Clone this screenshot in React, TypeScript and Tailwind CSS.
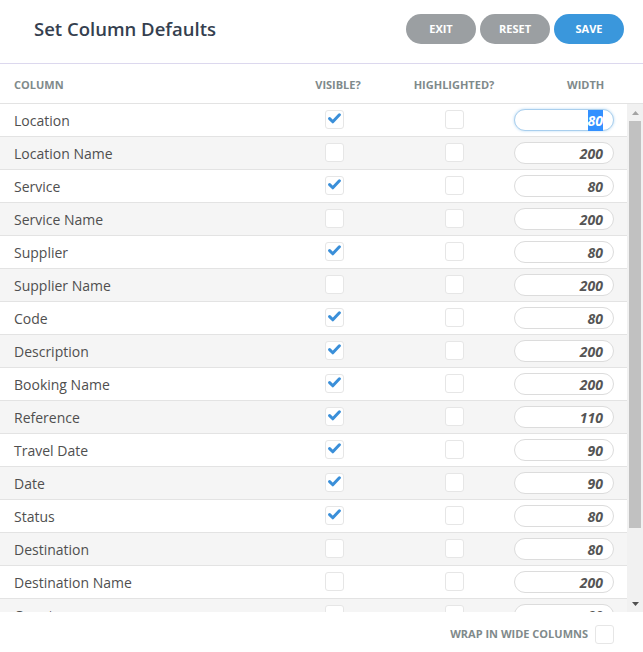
import React from 'react'

type Row = { name: string; visible: boolean; width: number }

const rows: Row[] = [
  { name: 'Location', visible: true, width: 80 },
  { name: 'Location Name', visible: false, width: 200 },
  { name: 'Service', visible: true, width: 80 },
  { name: 'Service Name', visible: false, width: 200 },
  { name: 'Supplier', visible: true, width: 80 },
  { name: 'Supplier Name', visible: false, width: 200 },
  { name: 'Code', visible: true, width: 80 },
  { name: 'Description', visible: true, width: 200 },
  { name: 'Booking Name', visible: true, width: 200 },
  { name: 'Reference', visible: true, width: 110 },
  { name: 'Travel Date', visible: true, width: 90 },
  { name: 'Date', visible: true, width: 90 },
  { name: 'Status', visible: true, width: 80 },
  { name: 'Destination', visible: false, width: 80 },
  { name: 'Destination Name', visible: false, width: 200 },
  { name: 'Country', visible: false, width: 80 },
  { name: 'Country Name', visible: false, width: 200 },
  { name: 'Voucher', visible: false, width: 80 },
]

function Box({ checked }: { checked?: boolean }) {
  return (
    <div className="flex h-[19px] w-[19px] items-center justify-center rounded-[3px] border border-[#e6e6e6] bg-white">
      {checked && (
        <svg width="13" height="11" viewBox="0 0 13 11" className="-mt-[1px]">
          <path d="M1.6 5.6 L4.8 8.8 L11.4 1.8" fill="none" stroke="#3a8fd9" strokeWidth="3" strokeLinecap="round" strokeLinejoin="round" />
        </svg>
      )}
    </div>
  )
}

export default function App() {
  return (
    <div className="h-[652px] w-[643px] overflow-hidden bg-white font-['Open_Sans',sans-serif]">
      <div className="flex h-[64px] items-start justify-between border-b border-[#dcd8ee] pl-[34px] pr-[19px] pt-[14px]">
        <h1 className="text-[18.5px] leading-[30px] font-semibold text-[#353f4f]">Set Column Defaults</h1>
        <div className="flex gap-[4px]">
          <button className="h-[30px] w-[70px] rounded-full bg-[#9b9fa2] text-[11px] font-bold text-white">EXIT</button>
          <button className="h-[30px] w-[70px] rounded-full bg-[#9b9fa2] text-[11px] font-bold text-white">RESET</button>
          <button className="h-[30px] w-[70px] rounded-full bg-[#3a97dc] text-[11px] font-bold text-white">SAVE</button>
        </div>
      </div>

      <div className="flex h-[40px] items-center border-b border-[#e3e3e3] pt-[4px] pr-[16px] text-[11px] font-bold text-[#7f8a8b]">
        <div className="flex-1 pl-[14px]">COLUMN</div>
        <div className="w-[120px] pl-[8px] text-center">VISIBLE?</div>
        <div className="w-[120px] text-center">HIGHLIGHTED?</div>
        <div className="w-[113px] pl-[53px]">WIDTH</div>
      </div>

      <div className="flex h-[508px]">
        <div className="flex-1 overflow-hidden">
          {rows.map((r, i) => (
            <div
              key={r.name}
              className={`flex h-[33px] items-center border-b border-[#e3e3e3] text-[14px] text-[#4f4f4f] ${i % 2 ? 'bg-[#f5f5f5]' : 'bg-white'}`}
            >
              <div className="flex-1 pl-[14px]">{r.name}</div>
              <div className="flex w-[120px] justify-center pb-[2px]">
                <Box checked={r.visible} />
              </div>
              <div className="flex w-[120px] justify-center pb-[2px]">
                <Box />
              </div>
              <div className="w-[113px]">
                <div
                  className={`flex h-[22px] w-[100px] items-center justify-end rounded-full border bg-white pr-[10px] text-[14px] font-bold italic text-[#555] ${i === 0 ? 'border-[#a9cfee] shadow-[0_0_3px_#b9d9f2]' : 'border-[#dcdcdc]'}`}
                >
                  {i === 0 ? <span className="bg-[#3390ff] text-white">{r.width}</span> : r.width}
                </div>
              </div>
            </div>
          ))}
        </div>
        <div className="flex w-[16px] flex-col bg-[#f1f1f1]">
          <div className="flex h-[17px] items-center justify-center">
            <svg width="7" height="4" viewBox="0 0 7 4"><path d="M0 4 L3.5 0 L7 4 Z" fill="#a3a3a3" /></svg>
          </div>
          <div className="mx-[2px] h-[407px] bg-[#c1c1c1]" />
          <div className="flex-1" />
          <div className="flex h-[17px] items-center justify-center">
            <svg width="7" height="4" viewBox="0 0 7 4"><path d="M0 0 L7 0 L3.5 4 Z" fill="#505050" /></svg>
          </div>
        </div>
      </div>

      <div className="flex h-[40px] items-center justify-end gap-[7px] pt-[4px] pr-[29px]">
        <span className="text-[11px] font-bold text-[#7f8a8b]">WRAP IN WIDE COLUMNS</span>
        <Box />
      </div>
    </div>
  )
}
